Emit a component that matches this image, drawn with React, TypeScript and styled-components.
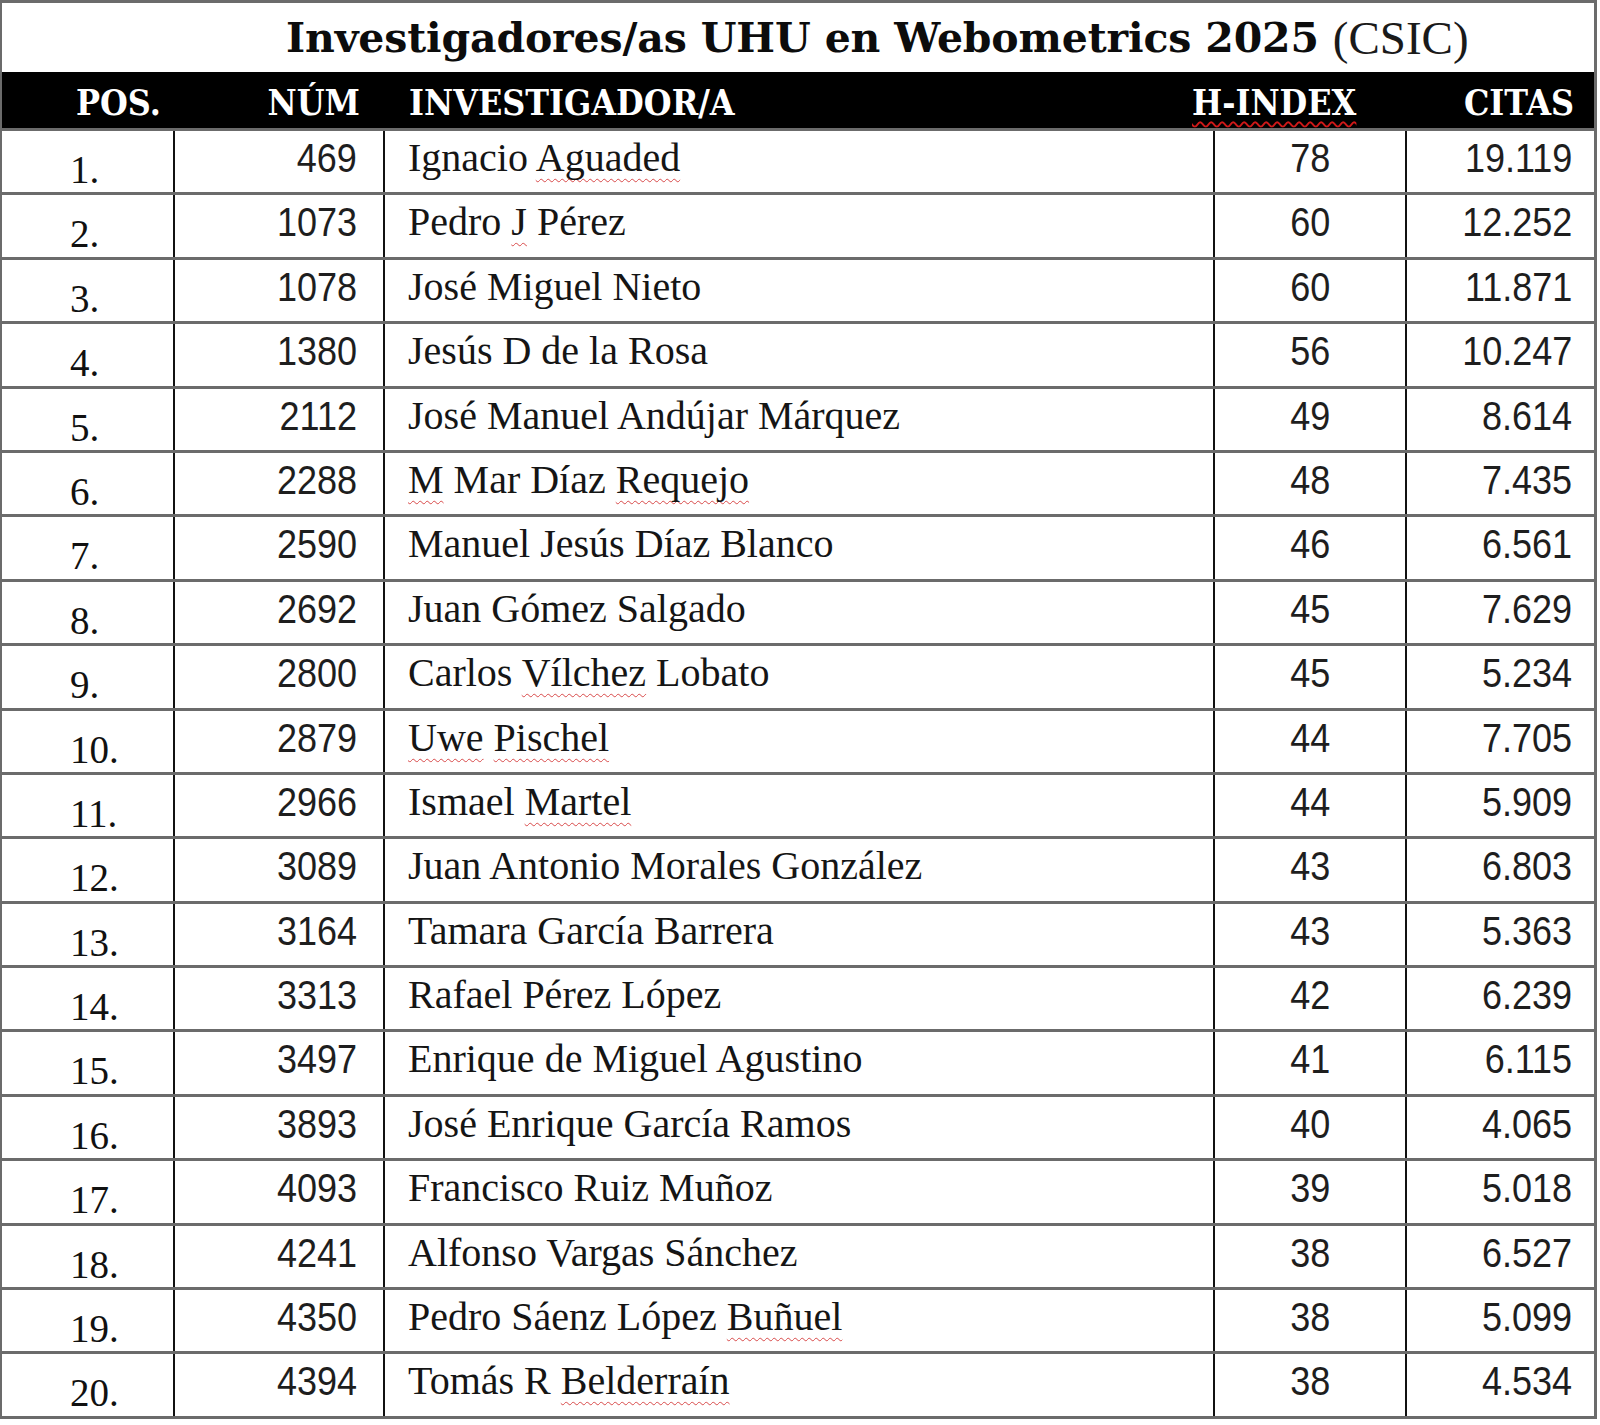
import React from "react";
import styled, { createGlobalStyle } from "styled-components";

interface Researcher {
  pos: number;
  num: number;
  name: string;
  flagged: string[];
  hIndex: number;
  citas: string;
}

const researchers: Researcher[] = [
  { pos: 1, num: 469, name: "Ignacio Aguaded", flagged: ["Aguaded"], hIndex: 78, citas: "19.119" },
  { pos: 2, num: 1073, name: "Pedro J Pérez", flagged: ["J"], hIndex: 60, citas: "12.252" },
  { pos: 3, num: 1078, name: "José Miguel Nieto", flagged: [], hIndex: 60, citas: "11.871" },
  { pos: 4, num: 1380, name: "Jesús D de la Rosa", flagged: [], hIndex: 56, citas: "10.247" },
  { pos: 5, num: 2112, name: "José Manuel Andújar Márquez", flagged: [], hIndex: 49, citas: "8.614" },
  { pos: 6, num: 2288, name: "M Mar Díaz Requejo", flagged: ["M", "Requejo"], hIndex: 48, citas: "7.435" },
  { pos: 7, num: 2590, name: "Manuel Jesús Díaz Blanco", flagged: [], hIndex: 46, citas: "6.561" },
  { pos: 8, num: 2692, name: "Juan Gómez Salgado", flagged: [], hIndex: 45, citas: "7.629" },
  { pos: 9, num: 2800, name: "Carlos Vílchez Lobato", flagged: ["Vílchez"], hIndex: 45, citas: "5.234" },
  { pos: 10, num: 2879, name: "Uwe Pischel", flagged: ["Uwe", "Pischel"], hIndex: 44, citas: "7.705" },
  { pos: 11, num: 2966, name: "Ismael Martel", flagged: ["Martel"], hIndex: 44, citas: "5.909" },
  { pos: 12, num: 3089, name: "Juan Antonio Morales González", flagged: [], hIndex: 43, citas: "6.803" },
  { pos: 13, num: 3164, name: "Tamara García Barrera", flagged: [], hIndex: 43, citas: "5.363" },
  { pos: 14, num: 3313, name: "Rafael Pérez López", flagged: [], hIndex: 42, citas: "6.239" },
  { pos: 15, num: 3497, name: "Enrique de Miguel Agustino", flagged: [], hIndex: 41, citas: "6.115" },
  { pos: 16, num: 3893, name: "José Enrique García Ramos", flagged: [], hIndex: 40, citas: "4.065" },
  { pos: 17, num: 4093, name: "Francisco Ruiz Muñoz", flagged: [], hIndex: 39, citas: "5.018" },
  { pos: 18, num: 4241, name: "Alfonso Vargas Sánchez", flagged: [], hIndex: 38, citas: "6.527" },
  { pos: 19, num: 4350, name: "Pedro Sáenz López Buñuel", flagged: ["Buñuel"], hIndex: 38, citas: "5.099" },
  { pos: 20, num: 4394, name: "Tomás R Belderraín", flagged: ["Belderraín"], hIndex: 38, citas: "4.534" },
];

const GlobalStyle = createGlobalStyle`
  html, body {
    margin: 0;
    padding: 0;
    background: #ffffff;
  }
  body {
    font-family: "Liberation Serif", serif;
    color: #111;
  }
`;

const Sheet = styled.div`
  width: 1597px;
  border: 3px solid #6b6b6b;
  border-left-width: 2px;
  box-sizing: border-box;
  background: #fff;
`;

const TitleRow = styled.div`
  height: 69px;
  display: flex;
  align-items: center;
  padding-left: 284px;
  white-space: nowrap;
`;

const TitleBold = styled.span`
  font-family: "DejaVu Serif", serif;
  font-weight: 700;
  font-size: 41px;
  letter-spacing: -0.15px;
  color: #0c0c0c;
`;

const TitleLight = styled.span`
  font-family: "Liberation Serif", serif;
  font-size: 47px;
  margin-left: 14px;
  color: #1a1a1a;
`;

const HeaderBand = styled.div`
  display: grid;
  grid-template-columns: 171px 187px 832px 214px 1fr;
  height: 56px;
  background: #000;
  align-items: center;
`;

const HeadCell = styled.div<{ $align?: "left" | "right"; $pad?: number }>`
  font-family: "DejaVu Serif", serif;
  font-stretch: condensed;
  font-weight: 700;
  font-size: 35.5px;
  color: #fff;
  white-space: nowrap;
  text-align: ${(p) => p.$align ?? "left"};
  padding-left: ${(p) => (p.$align === "right" ? 0 : p.$pad ?? 0)}px;
  padding-right: ${(p) => (p.$align === "right" ? p.$pad ?? 0 : 0)}px;
  padding-top: 4px;
`;

const Row = styled.div`
  display: grid;
  grid-template-columns: 171px 210px 830px 192px 1fr;
  height: 64.4px;
  box-sizing: border-box;
  border-top: 3px solid #6b6b6b;
`;

const Cell = styled.div<{ $align?: "left" | "right" | "center"; $first?: boolean }>`
  border-left: ${(p) => (p.$first ? "none" : "2px solid #111")};
  text-align: ${(p) => p.$align ?? "left"};
  white-space: nowrap;
  overflow: hidden;
`;

const PosText = styled.div`
  font-family: "Liberation Serif", serif;
  font-size: 39px;
  line-height: 44px;
  padding: 17px 0 0 68px;
`;

const NumBox = styled.div<{ $padRight?: number }>`
  line-height: 44px;
  padding-top: 5px;
  padding-right: ${(p) => p.$padRight ?? 0}px;
`;

/* the reference digits are a narrow sans; squeeze Liberation Sans to match */
const Digits = styled.span<{ $origin?: "right" | "center" }>`
  display: inline-block;
  font-family: "Liberation Sans", sans-serif;
  font-size: 40px;
  color: #1e1e1e;
  transform: scaleX(0.9);
  transform-origin: ${(p) => p.$origin ?? "right"} center;
`;

const NameText = styled.div`
  font-family: "Liberation Serif", serif;
  font-size: 40px;
  line-height: 44px;
  padding: 5px 0 0 23px;
  color: #151515;
`;

const Misspelled = styled.span`
  text-decoration: underline wavy #d84a4a;
  text-decoration-thickness: 1px;
  text-underline-offset: 7px;
  text-decoration-skip-ink: none;
`;

const WavyHead = styled.span`
  text-decoration: underline wavy #d01818;
  text-decoration-thickness: 2px;
  text-underline-offset: 6px;
  text-decoration-skip-ink: none;
`;

const Name = ({ name, flagged }: { name: string; flagged: string[] }) => {
  const words = name.split(" ");
  return (
    <>
      {words.map((w, i) => (
        <React.Fragment key={i}>
          {i > 0 && " "}
          {flagged.includes(w) ? <Misspelled>{w}</Misspelled> : w}
        </React.Fragment>
      ))}
    </>
  );
};

const App = () => {
  return (
    <>
      <GlobalStyle />
      <Sheet>
        <TitleRow>
          <TitleBold>Investigadores/as UHU en Webometrics 2025</TitleBold>
          <TitleLight>(CSIC)</TitleLight>
        </TitleRow>
        <HeaderBand>
          <HeadCell $pad={74}>POS.</HeadCell>
          <HeadCell $align="right" $pad={0}>NÚM</HeadCell>
          <HeadCell $pad={49}>INVESTIGADOR/A</HeadCell>
          <HeadCell>
            <WavyHead>H-INDEX</WavyHead>
          </HeadCell>
          <HeadCell $align="right" $pad={20}>CITAS</HeadCell>
        </HeaderBand>
        {researchers.map((r) => (
          <Row key={r.pos}>
            <Cell $first>
              <PosText>{r.pos}.</PosText>
            </Cell>
            <Cell $align="right">
              <NumBox $padRight={26}>
                <Digits>{r.num}</Digits>
              </NumBox>
            </Cell>
            <Cell>
              <NameText>
                <Name name={r.name} flagged={r.flagged} />
              </NameText>
            </Cell>
            <Cell $align="center">
              <NumBox>
                <Digits $origin="center">{r.hIndex}</Digits>
              </NumBox>
            </Cell>
            <Cell $align="right">
              <NumBox $padRight={22}>
                <Digits>{r.citas}</Digits>
              </NumBox>
            </Cell>
          </Row>
        ))}
      </Sheet>
    </>
  );
};

export default App;
